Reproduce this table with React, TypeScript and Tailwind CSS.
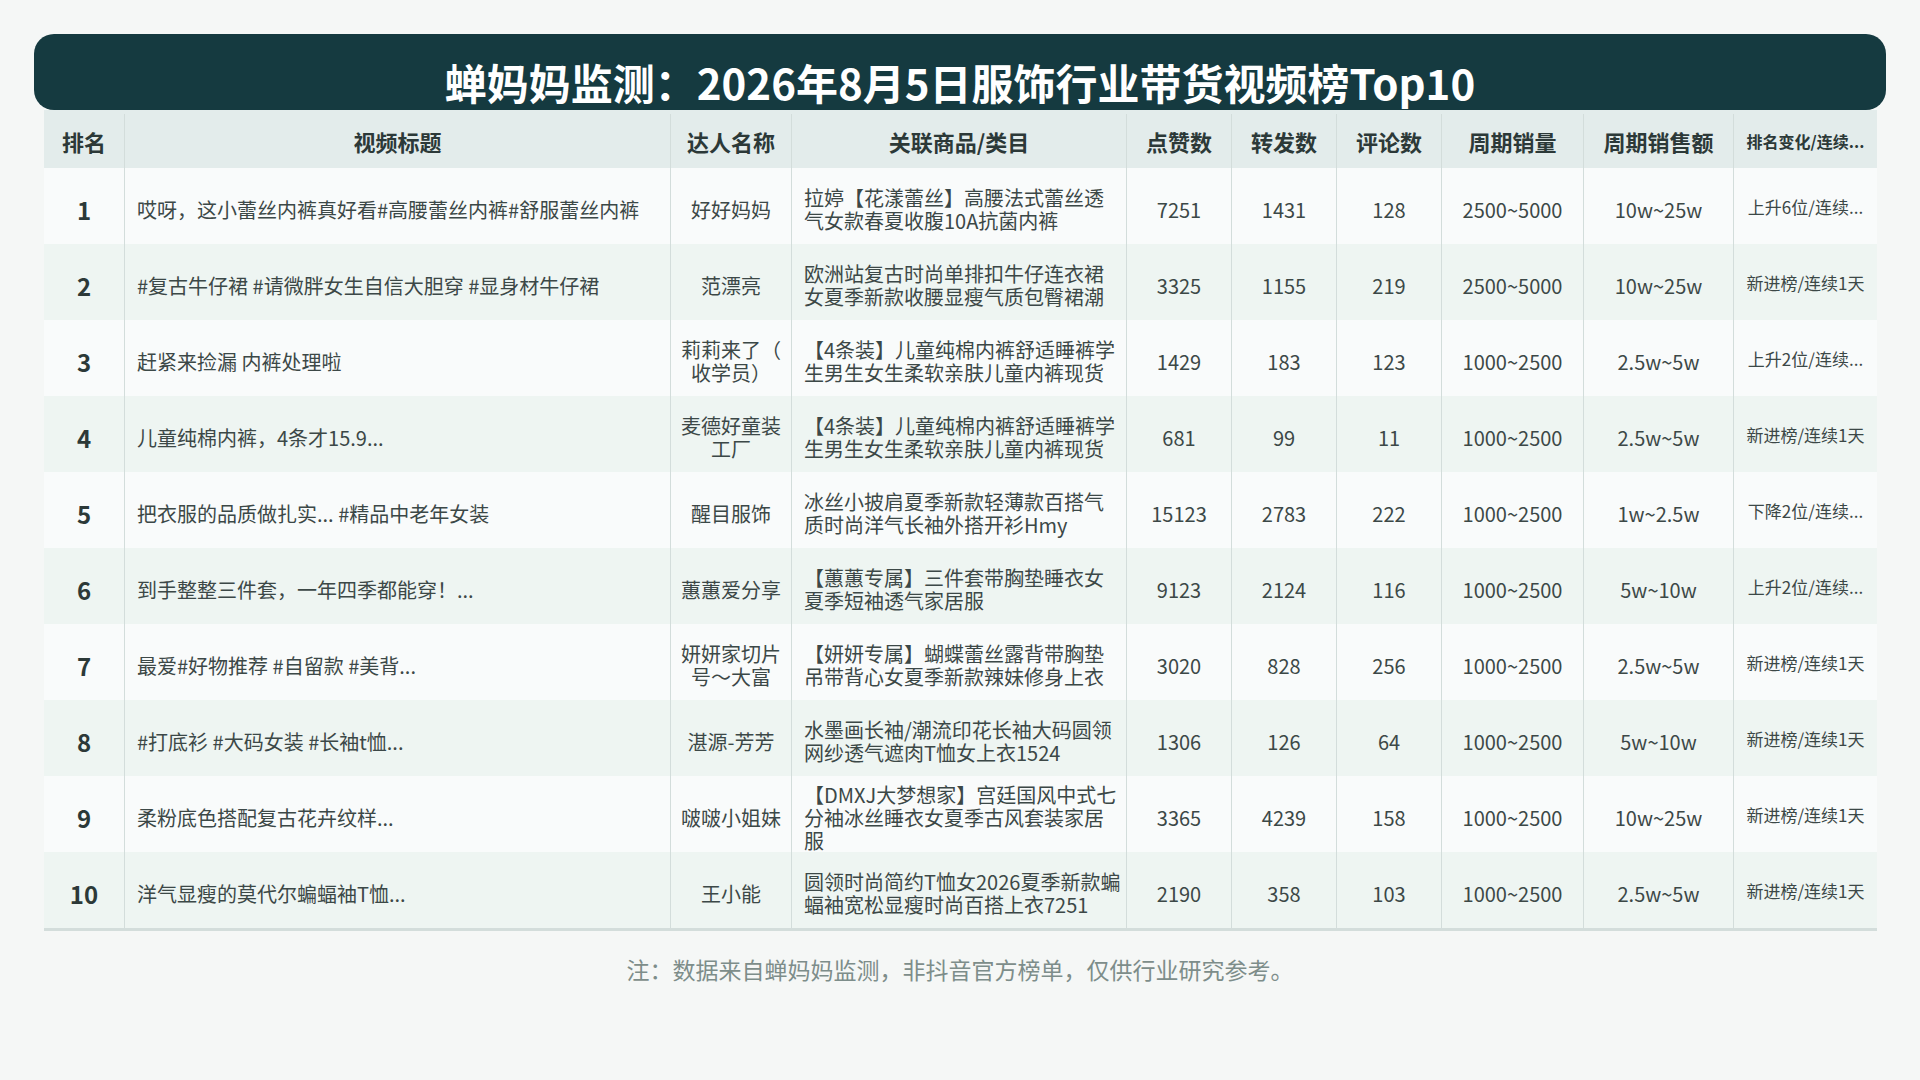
import React from 'react'

type Row = {
  rank: number
  title: string
  talent: string
  product: string
  likes: string
  shares: string
  comments: string
  sales: string
  revenue: string
  change: string
}

const ROWS: Row[] = [
  { rank: 1, title: '哎呀，这小蕾丝内裤真好看#高腰蕾丝内裤#舒服蕾丝内裤', talent: '好好妈妈', product: '拉婷【花漾蕾丝】高腰法式蕾丝透气女款春夏收腹10A抗菌内裤', likes: '7251', shares: '1431', comments: '128', sales: '2500~5000', revenue: '10w~25w', change: '上升6位/连续...' },
  { rank: 2, title: '#复古牛仔裙 #请微胖女生自信大胆穿 #显身材牛仔裙', talent: '范漂亮', product: '欧洲站复古时尚单排扣牛仔连衣裙女夏季新款收腰显瘦气质包臀裙潮', likes: '3325', shares: '1155', comments: '219', sales: '2500~5000', revenue: '10w~25w', change: '新进榜/连续1天' },
  { rank: 3, title: '赶紧来捡漏 内裤处理啦', talent: '莉莉来了（收学员）', product: '【4条装】儿童纯棉内裤舒适睡裤学生男生女生柔软亲肤儿童内裤现货', likes: '1429', shares: '183', comments: '123', sales: '1000~2500', revenue: '2.5w~5w', change: '上升2位/连续...' },
  { rank: 4, title: '儿童纯棉内裤，4条才15.9...', talent: '麦德好童装工厂', product: '【4条装】儿童纯棉内裤舒适睡裤学生男生女生柔软亲肤儿童内裤现货', likes: '681', shares: '99', comments: '11', sales: '1000~2500', revenue: '2.5w~5w', change: '新进榜/连续1天' },
  { rank: 5, title: '把衣服的品质做扎实... #精品中老年女装', talent: '醒目服饰', product: '冰丝小披肩夏季新款轻薄款百搭气质时尚洋气长袖外搭开衫Hmy', likes: '15123', shares: '2783', comments: '222', sales: '1000~2500', revenue: '1w~2.5w', change: '下降2位/连续...' },
  { rank: 6, title: '到手整整三件套，一年四季都能穿！...', talent: '蕙蕙爱分享', product: '【蕙蕙专属】三件套带胸垫睡衣女夏季短袖透气家居服', likes: '9123', shares: '2124', comments: '116', sales: '1000~2500', revenue: '5w~10w', change: '上升2位/连续...' },
  { rank: 7, title: '最爱#好物推荐 #自留款 #美背...', talent: '妍妍家切片号～大富', product: '【妍妍专属】蝴蝶蕾丝露背带胸垫吊带背心女夏季新款辣妹修身上衣', likes: '3020', shares: '828', comments: '256', sales: '1000~2500', revenue: '2.5w~5w', change: '新进榜/连续1天' },
  { rank: 8, title: '#打底衫 #大码女装 #长袖t恤...', talent: '湛源-芳芳', product: '水墨画长袖/潮流印花长袖大码圆领网纱透气遮肉T恤女上衣1524', likes: '1306', shares: '126', comments: '64', sales: '1000~2500', revenue: '5w~10w', change: '新进榜/连续1天' },
  { rank: 9, title: '柔粉底色搭配复古花卉纹样...', talent: '啵啵小姐妹', product: '【DMXJ大梦想家】宫廷国风中式七分袖冰丝睡衣女夏季古风套装家居服', likes: '3365', shares: '4239', comments: '158', sales: '1000~2500', revenue: '10w~25w', change: '新进榜/连续1天' },
  { rank: 10, title: '洋气显瘦的莫代尔蝙蝠袖T恤...', talent: '王小能', product: '圆领时尚简约T恤女2026夏季新款蝙蝠袖宽松显瘦时尚百搭上衣7251', likes: '2190', shares: '358', comments: '103', sales: '1000~2500', revenue: '2.5w~5w', change: '新进榜/连续1天' },
]

const GRID = 'grid grid-cols-[81px_546px_121px_335px_105px_105px_105px_142px_150px_143px]'

export default function App() {
  return (
    <div className="w-full h-[1080px] bg-[#f5f7f6] font-['Noto_Sans_CJK_SC','Noto_Sans',sans-serif] overflow-hidden">
      {/* Title banner */}
      <div className="pt-[34px] px-[34px]">
        <div className="h-[76px] rounded-[20px] bg-[#153a40] flex justify-center pt-[27px]">
          <h1 className="text-[42px] leading-none font-bold text-white whitespace-nowrap">
            蝉妈妈监测：2026年8月5日服饰行业带货视频榜Top10
          </h1>
        </div>
      </div>

      {/* Table */}
      <div className="ml-[44px] w-[1833px] border-b-[3px] border-[#d3dddb]">
        <div className={`${GRID} h-[58px] pt-[4px] bg-[#e3eceb] text-[22px] font-bold text-[#2c3938]`}>
          <div className="flex items-center justify-center border-r border-[#d3dddb]">排名</div>
          <div className="flex items-center justify-center border-r border-[#d3dddb]">视频标题</div>
          <div className="flex items-center justify-center border-r border-[#d3dddb]">达人名称</div>
          <div className="flex items-center justify-center border-r border-[#d3dddb]">关联商品/类目</div>
          <div className="flex items-center justify-center border-r border-[#d3dddb]">点赞数</div>
          <div className="flex items-center justify-center border-r border-[#d3dddb]">转发数</div>
          <div className="flex items-center justify-center border-r border-[#d3dddb]">评论数</div>
          <div className="flex items-center justify-center border-r border-[#d3dddb]">周期销量</div>
          <div className="flex items-center justify-center border-r border-[#d3dddb]">周期销售额</div>
          <div className="flex items-center justify-center px-2 text-[16px] whitespace-nowrap">排名变化/连续...</div>
        </div>

        {ROWS.map((r, i) => (
          <div
            key={r.rank}
            className={`${GRID} h-[76px] text-[20px] text-[#3c4847] ${i % 2 === 0 ? 'bg-[#f9fbfb]' : 'bg-[#eef5f2]'}`}
          >
            <div className="flex items-center justify-center pt-[8px] border-r border-[#d3dddb] text-[24px] font-bold text-[#2c3938]">
              {r.rank}
            </div>
            <div className="flex items-center pt-[8px] pl-3 pr-2 border-r border-[#d3dddb] whitespace-nowrap overflow-hidden">
              {r.title}
            </div>
            <div className="flex items-center justify-center pt-[6px] px-2 border-r border-[#d3dddb] text-center leading-[23px] [line-break:anywhere]">
              {r.talent}
            </div>
            <div className="flex items-center pt-[6px] pl-3 pr-[3px] border-r border-[#d3dddb] leading-[23px] [line-break:anywhere]">
              {r.product}
            </div>
            <div className="flex items-center justify-center pt-[8px] border-r border-[#d3dddb]">{r.likes}</div>
            <div className="flex items-center justify-center pt-[8px] border-r border-[#d3dddb]">{r.shares}</div>
            <div className="flex items-center justify-center pt-[8px] border-r border-[#d3dddb]">{r.comments}</div>
            <div className="flex items-center justify-center pt-[8px] border-r border-[#d3dddb]">{r.sales}</div>
            <div className="flex items-center justify-center pt-[8px] border-r border-[#d3dddb]">{r.revenue}</div>
            <div className="flex items-center justify-center pt-[2px] px-2 text-[17px] whitespace-nowrap">
              {r.change}
            </div>
          </div>
        ))}
      </div>

      {/* Footnote */}
      <p className="mt-[21px] text-center text-[23px] leading-[34px] text-[#7d8d8a]">
        注：数据来自蝉妈妈监测，非抖音官方榜单，仅供行业研究参考。
      </p>
    </div>
  )
}
